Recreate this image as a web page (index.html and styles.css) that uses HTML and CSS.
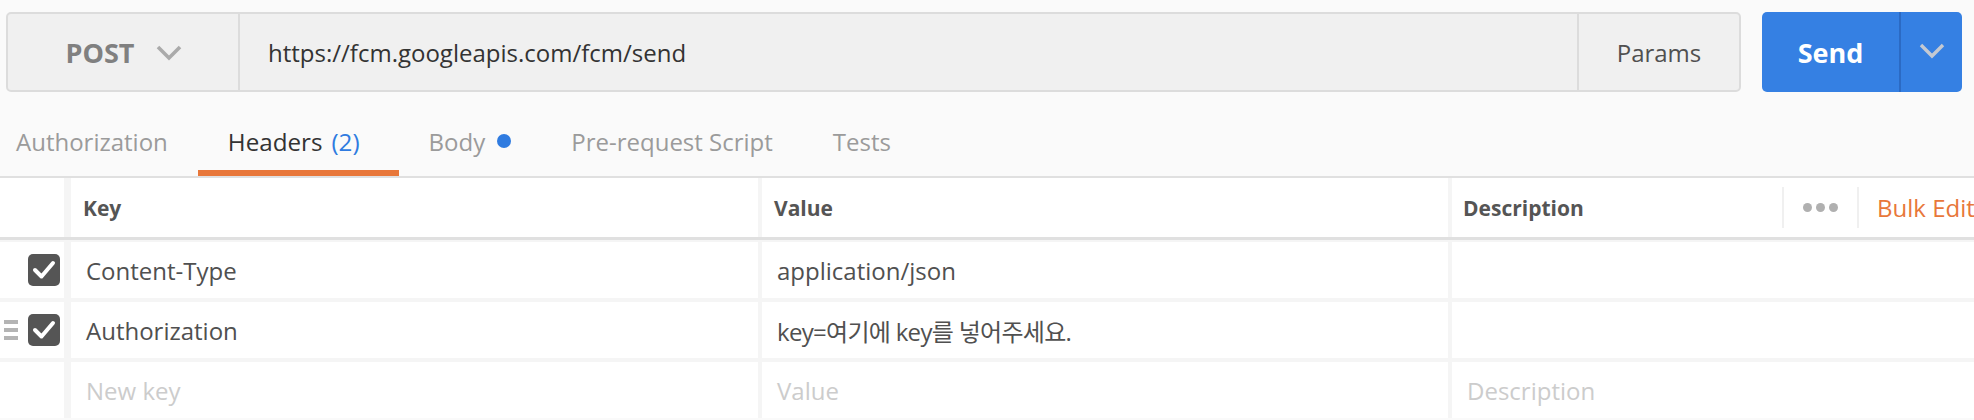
FILE: index.html
```html
<!DOCTYPE html>
<html lang="ko">
<head>
<meta charset="utf-8">
<title>Postman request</title>
<link rel="stylesheet" href="styles.css">
</head>
<body>
<div class="topbar">
  <div class="urlbox">
    <div class="method">
      <span class="method-name">POST</span>
      <svg class="chev" width="26" height="18" viewBox="0 0 26 18"><polyline points="2,3 13,14 24,3" fill="none" stroke="#aaaaaa" stroke-width="3.6"/></svg>
    </div>
    <div class="url">https://fcm.googleapis.com/fcm/send</div>
    <div class="params">Params</div>
  </div>
  <div class="send">
    <div class="send-main">Send</div>
    <div class="send-arrow">
      <svg width="26" height="16" viewBox="0 0 26 16"><polyline points="2,2 13,13 24,2" fill="none" stroke="#c4c9d2" stroke-width="3.4"/></svg>
    </div>
  </div>
</div>

<div class="tabs">
  <div class="tab">Authorization</div>
  <div class="tab active">Headers <span class="count">(2)</span></div>
  <div class="tab">Body <span class="dot"></span></div>
  <div class="tab">Pre-request Script</div>
  <div class="tab">Tests</div>
</div>

<div class="table">
  <div class="trow thead">
    <div class="cell chk"></div>
    <div class="cell">Key</div>
    <div class="cell">Value</div>
    <div class="cell desc-head">
      <span class="desc-title">Description</span>
      <span class="vsep"></span>
      <span class="dots"><i></i><i></i><i></i></span>
      <span class="vsep"></span>
      <span class="bulk">Bulk Edit</span>
    </div>
  </div>
  <div class="trow">
    <div class="cell chk"><span class="box"><svg width="32" height="32" viewBox="0 0 32 32"><polyline points="7,16 13.5,22.5 25,9" fill="none" stroke="#fff" stroke-width="4" stroke-linecap="round" stroke-linejoin="round"/></svg></span></div>
    <div class="cell">Content-Type</div>
    <div class="cell">application/json</div>
    <div class="cell"></div>
  </div>
  <div class="trow">
    <div class="cell chk"><span class="handle"><i></i><i></i><i></i></span><span class="box"><svg width="32" height="32" viewBox="0 0 32 32"><polyline points="7,16 13.5,22.5 25,9" fill="none" stroke="#fff" stroke-width="4" stroke-linecap="round" stroke-linejoin="round"/></svg></span></div>
    <div class="cell">Authorization</div>
    <div class="cell"><span class="ko">key=여기에 key를 넣어주세요.</span></div>
    <div class="cell"></div>
  </div>
  <div class="trow">
    <div class="cell chk"></div>
    <div class="cell ph">New key</div>
    <div class="cell ph">Value</div>
    <div class="cell ph">Description</div>
  </div>
</div>
</body>
</html>
```

FILE: styles.css
```css
* { box-sizing: border-box; }
html, body { margin: 0; padding: 0; }
body {
  width: 1974px;
  height: 420px;
  overflow: hidden;
  background: #fafafa;
  font-family: "Open Sans", "Noto Sans CJK KR", sans-serif;
  color: #505050;
}

.topbar {
  display: flex;
  gap: 21px;
  padding: 12px 12px 0 6px;
  height: 92px;
}
.urlbox {
  flex: 1;
  display: flex;
  height: 80px;
  background: #f0f0f0;
  border: 2px solid #dcdcdc;
  border-radius: 5px;
}
.method {
  width: 232px;
  border-right: 2px solid #dcdcdc;
  display: flex;
  align-items: center;
  justify-content: center;
  gap: 22px;
  padding-left: 2px;
}
.method-name {
  font-size: 27px;
  font-weight: 700;
  color: #808080;
}
.chev { margin-top: 2px; }
.url {
  flex: 1;
  display: flex;
  align-items: center;
  padding-left: 28px;
  font-size: 24px;
  color: #333333;
}
.params {
  width: 162px;
  border-left: 2px solid #dcdcdc;
  display: flex;
  align-items: center;
  justify-content: center;
  font-size: 24px;
  color: #505050;
}
.send {
  width: 200px;
  height: 80px;
  background: #3580e3;
  border-radius: 5px;
  display: flex;
}
.send-main {
  width: 139px;
  border-right: 2px solid #2b6ac4;
  display: flex;
  align-items: center;
  justify-content: center;
  font-size: 27px;
  font-weight: 700;
  color: #ffffff;
}
.send-arrow {
  flex: 1;
  display: flex;
  align-items: center;
  justify-content: center;
  padding-bottom: 2px;
}

.tabs {
  display: flex;
  height: 86px;
  border-bottom: 2px solid #e0e0e0;
}
.tab {
  display: flex;
  align-items: center;
  gap: 9px;
  height: 84px;
  padding: 20px 30px 0 30px;
  border-bottom: 6px solid transparent;
  font-size: 24px;
  color: #9b9b9b;
}
.tab:first-child { padding-left: 16px; }
.tab.active {
  color: #333333;
  border-bottom-color: #e8773a;
  padding-right: 39px;
  font-size: 24.2px;
}
.count { color: #2f7be0; }
.dot {
  display: inline-block;
  width: 14px;
  height: 14px;
  border-radius: 50%;
  background: #2f7be0;
  margin-left: 3px;
}

.table { background: #f5f5f5; }
.trow {
  display: grid;
  grid-template-columns: 67px 687px 686px 1fr;
  column-gap: 4px;
  height: 56px;
  margin-bottom: 4px;
}
.trow > .cell:first-child { margin-right: 3px; }
.trow.thead {
  height: 62px;
  border-bottom: 3px solid #e0e0e0;
  margin-bottom: 2px;
}
.cell {
  background: #ffffff;
  display: flex;
  align-items: center;
  padding-left: 15px;
  font-size: 24px;
  color: #505050;
  white-space: nowrap;
  overflow: hidden;
}
.cell > * { flex-shrink: 0; }
.ko { letter-spacing: -0.7px; }
.thead .cell {
  padding-left: 12px;
  font-size: 21px;
  font-weight: 700;
  color: #555555;
}
.thead .cell.desc-head { padding-left: 11px; }
.cell.ph { color: #cccccc; }
.cell.chk {
  padding: 0 4px 0 0;
  justify-content: flex-end;
  gap: 10px;
}
.box {
  width: 32px;
  height: 32px;
  border-radius: 5px;
  background: #555555;
  display: flex;
}
.handle {
  display: flex;
  flex-direction: column;
  gap: 4px;
}
.handle i {
  display: block;
  width: 14px;
  height: 4px;
  background: #b4b4b4;
}
.desc-title { width: 319px; }
.vsep {
  width: 2px;
  height: 41px;
  background: #f0f0f0;
}
.dots {
  display: flex;
  gap: 4px;
  margin: 0 19px 0 19px;
}
.dots i {
  display: block;
  width: 9px;
  height: 9px;
  border-radius: 50%;
  background: #b0b0b0;
}
.bulk {
  margin-left: 18px;
  font-size: 24px;
  font-weight: 400;
  color: #e8773a;
}
```
